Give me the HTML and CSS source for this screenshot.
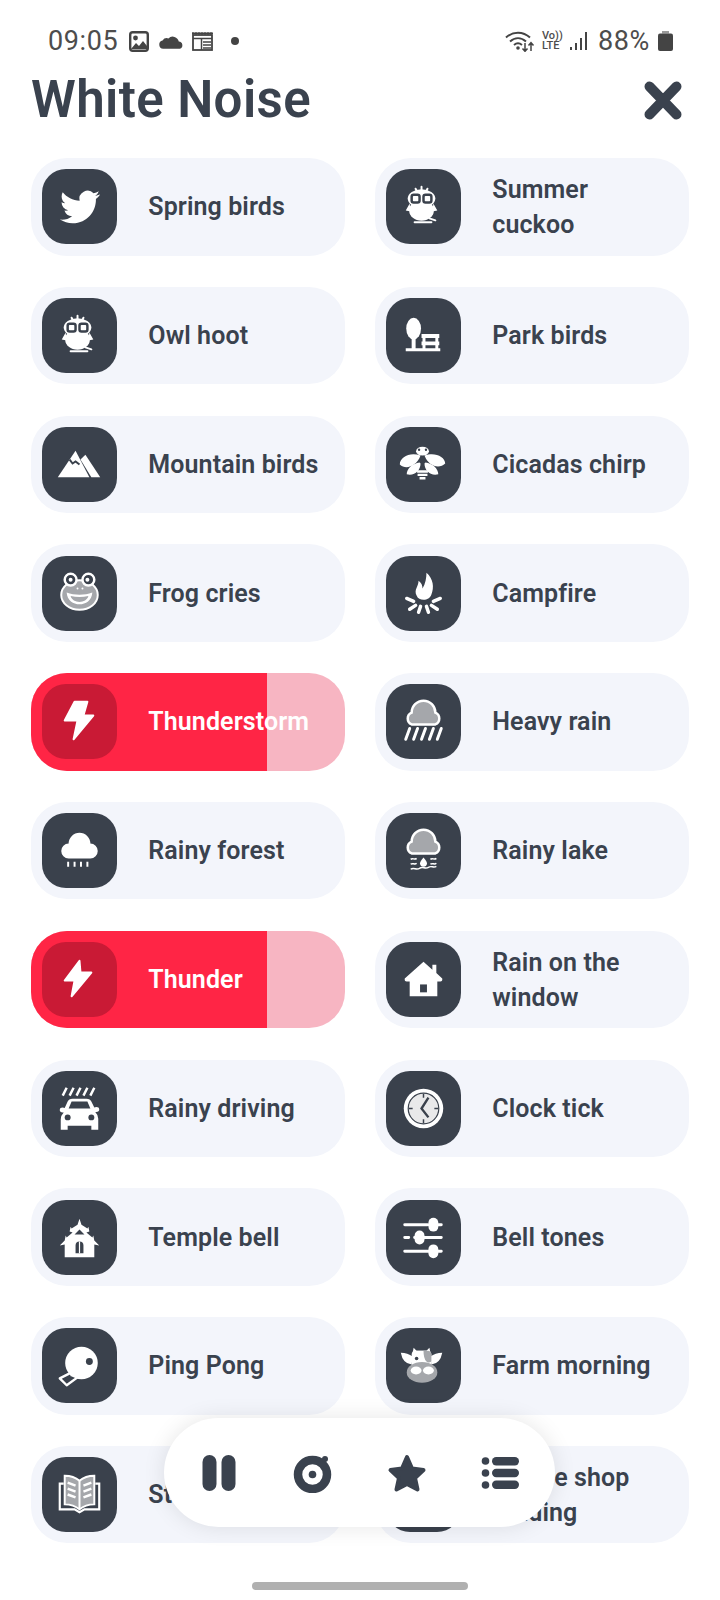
FILE: index.html
```html
<!DOCTYPE html>
<html lang="en">
<head>
  <meta charset="UTF-8" />
  <meta name="viewport" content="width=device-width, initial-scale=1" />
  <title>White Noise</title>
  <link rel="stylesheet" href="styles.css">
</head>
<body>
  <div class="page">
    <!-- Status bar -->
    <div class="status-bar">
      <div class="status-left">
        <span class="status-time">09:05</span>
        <svg class="st-image" viewBox="0 0 20 21"><rect x="1.200" y="1.200" width="17.600" height="18.600" rx="2.500" fill="#fff" stroke="#444" stroke-width="2.400"/><circle cx="6.500" cy="7" r="2.400" fill="#444"/><path d="M2 18l5-6 3 3 4-5 4 5v3H2z" fill="#444"/></svg>
        <svg class="st-cloud" viewBox="0 0 24 14"><path d="M4 14a4 4 0 0 1-.6-7.900A5 5 0 0 1 9 4a6 6 0 0 1 10 3 3.600 3.600 0 0 1 1 7z" fill="#444"/></svg>
        <svg class="st-cal" viewBox="0 0 21 19"><rect x="1" y="3" width="19" height="15" fill="#fff" stroke="#444" stroke-width="1.800"/><path d="M0 1.200h21M1 6.500h19M9.500 7v11M11 10h8M11 13h8M11 16h8" stroke="#444" stroke-width="1.500" fill="none"/><path d="M1 0v3M4 0v3M7 0v3M10 0v3M13 0v3M16 0v3M19 0v3" stroke="#444"/></svg>
        <span class="status-dot"></span>
      </div>
      <div class="status-right">
        <svg class="st-wifi" viewBox="0 0 30 22"><path d="M1 7.500C8 1 18 1 25 7.500M5 11.500c5-4.500 11-4.500 16 0M9 15c3-2.500 5-2.500 8 0" fill="none" stroke="#444" stroke-width="2"/><circle cx="13" cy="18" r="1.800" fill="#444"/><path d="M20 13v8M17.500 18.500l2.500 2.800 2.500-2.800M26 21v-8M23.500 15.500l2.500-2.800 2.500 2.800" fill="none" stroke="#444" stroke-width="1.500"/></svg>
        <span class="status-volte">Vo))<br>LTE</span>
        <svg class="st-signal" viewBox="0 0 18 18"><path d="M1 15v3M6 11v7M11 6v12M16 0v18" stroke="#444" stroke-width="2" fill="none"/></svg>
        <span class="status-battery-text">88%</span>
        <svg class="st-battery" viewBox="0 0 15 20"><path d="M4 0h7v2.500H4z" fill="#9a9a9a"/><rect y="2.500" width="15" height="17.500" rx="2" fill="#444"/></svg>
      </div>
    </div>

    <!-- Header -->
    <div class="header">
      <h1>White Noise</h1>
      <svg class="close-icon" viewBox="0 0 38 39"><path d="M5.500 5.500l27 28M32.500 5.500l-27 28" fill="none" stroke="#3a424e" stroke-width="10" stroke-linecap="round"/></svg>
    </div>

    <!-- Sound list -->
    <div class="sound-grid">
      <div class="sound-card">
        <div class="sound-icon"><svg viewBox="0 0 24 24" class="icon-bird"><path fill="#fff" d="M23.953 4.570a10 10 0 0 1-2.825.775 4.958 4.958 0 0 0 2.163-2.723c-.951.555-2.005.959-3.127 1.184a4.920 4.920 0 0 0-8.384 4.482C7.690 8.095 4.067 6.130 1.640 3.162a4.822 4.822 0 0 0-.666 2.475c0 1.710.870 3.213 2.188 4.096a4.904 4.904 0 0 1-2.228-.616v.060a4.923 4.923 0 0 0 3.946 4.827 4.996 4.996 0 0 1-2.212.085 4.936 4.936 0 0 0 4.604 3.417 9.867 9.867 0 0 1-6.102 2.105c-.390 0-.779-.023-1.170-.067a13.995 13.995 0 0 0 7.557 2.209c9.053 0 13.998-7.496 13.998-13.985 0-.210 0-.420-.015-.630A9.935 9.935 0 0 0 24 4.590z"/></svg></div>
        <span class="sound-name">Spring birds</span>
      </div>
      <div class="sound-card">
        <div class="sound-icon"><svg viewBox="0 0 76 76"><use href="#owl"/></svg></div>
        <span class="sound-name">Summer cuckoo</span>
      </div>
      <div class="sound-card">
        <div class="sound-icon"><svg viewBox="0 0 76 76"><use href="#owl"/></svg></div>
        <span class="sound-name">Owl hoot</span>
      </div>
      <div class="sound-card">
        <div class="sound-icon"><svg viewBox="0 0 76 76"><ellipse cx="28" cy="31" rx="7.500" ry="11" fill="#fff"/><path d="M26 40h4v12h-4zM20 51h35v3H20zM36 36.500h18v4H36zM36 44h18v4H36zM37 40h3v12h-3zM50 40h3v12h-3z" fill="#fff"/></svg></div>
        <span class="sound-name">Park birds</span>
      </div>
      <div class="sound-card">
        <div class="sound-icon"><svg viewBox="0 0 76 76"><path d="M16 51l18-27 14 27z" fill="#fff"/><path d="M28 33l3 4 3-2 4 3" fill="none" stroke="#3a414c" stroke-width="2"/><path d="M39 33l5-5 15 23H50z" fill="#fff"/></svg></div>
        <span class="sound-name">Mountain birds</span>
      </div>
      <div class="sound-card">
        <div class="sound-icon"><svg viewBox="0 0 76 76"><ellipse cx="37" cy="24.500" rx="6.500" ry="4.500" fill="#fff"/><circle cx="33.500" cy="23" r="1.200" fill="#3a414c"/><circle cx="40.500" cy="23" r="1.200" fill="#3a414c"/><path d="M35 29C25 25 14 30 14 38c6 6 17 2 21-9zM39 29c10-4 21 1 21 8-6 6-17 3-21-8z" fill="#fff"/><path d="M34 36c-7 1-13 6-13 12 8 2 14-4 14-11zM40 36c7 1 13 6 13 12-8 2-14-4-14-11z" fill="#fff"/><path d="M31.500 45h11M32 48.500h10M34 52h6" stroke="#fff" stroke-width="2.500" fill="none"/></svg></div>
        <span class="sound-name">Cicadas chirp</span>
      </div>
      <div class="sound-card">
        <div class="sound-icon"><svg viewBox="0 0 76 76"><ellipse cx="38" cy="39.500" rx="18.500" ry="15" fill="#a5a7ab" stroke="#fff" stroke-width="2"/><circle cx="29" cy="24" r="6" fill="#3a414c" stroke="#fff" stroke-width="2.500"/><circle cx="47" cy="24" r="6" fill="#3a414c" stroke="#fff" stroke-width="2.500"/><circle cx="29" cy="24" r="2" fill="#fff"/><circle cx="46" cy="24" r="2" fill="#fff"/><path d="M25 37c8 3 18 3 26 0-1 16-25 16-26 0z" fill="#fff"/><path d="M29 40.500c6 1.500 12 1.500 18 0-2 8-16 8-18 0z" fill="#a5a7ab"/><circle cx="36" cy="33" r="1" fill="#fff"/><circle cx="41" cy="33" r="1" fill="#fff"/></svg></div>
        <span class="sound-name">Frog cries</span>
      </div>
      <div class="sound-card">
        <div class="sound-icon"><svg viewBox="0 0 76 76"><path d="M41 17c7 6 8 15 5 22-2 7-13 7-15 1-3-6 2-9 2-15 3 2 4 5 4 8 3-5 4-11 4-16z" fill="#fff"/><path d="M21 43l7 3M24 54l6-4M33 57l2-6M43 57l-2-6M52 54l-6-4M55 43l-7 3" stroke="#fff" stroke-width="3.500" stroke-linecap="round"/></svg></div>
        <span class="sound-name">Campfire</span>
      </div>
      <div class="sound-card is-playing">
        <div class="sound-fill" style="width: 75%"></div>
        <div class="sound-icon"><svg viewBox="0 0 76 76"><path d="M33 18h13l-4 14h10L32 56l4-19H23z" fill="#fff" stroke="#fff" stroke-width="2" stroke-linejoin="round"/></svg></div>
        <span class="sound-name">Thunderstorm</span>
      </div>
      <div class="sound-card">
        <div class="sound-icon"><svg viewBox="0 0 76 76"><use href="#cloud-gray"/><path d="M20 56l4-11M28 56l4-11M36 56l4-11M44 56l4-11M52 56l4-11" stroke="#fff" stroke-width="3" stroke-linecap="round"/></svg></div>
        <span class="sound-name">Heavy rain</span>
      </div>
      <div class="sound-card">
        <div class="sound-icon"><svg viewBox="0 0 76 76"><path d="M27 46A7.500 7.500 0 0 1 27 31 11 11 0 0 1 49 31 7.500 7.500 0 0 1 49 46z" fill="#fff"/><path d="M26.500 49.500v5M33 49.500v5M39.500 49.500v5M46 49.500v5" stroke="#fff" stroke-width="2"/></svg></div>
        <span class="sound-name">Rainy forest</span>
      </div>
      <div class="sound-card">
        <div class="sound-icon"><svg viewBox="0 0 76 76"><use href="#cloud-gray"/><path d="M38 45c2.500 3 3.500 4.500 3.500 6a3.500 3.500 0 0 1-7 0c0-1.500 1-3 3.500-6z" fill="#fff"/><path d="M25 47c2-2 4 1 6-1M45 47c2-2 4 1 6-1M25 52c2-2 4 1 6-1M45 52c2-2 4 1 6-1M25 57c3-2 6 1 9-1s6 1 9-1 5 1 8-1" stroke="#fff" stroke-width="1.500" fill="none"/></svg></div>
        <span class="sound-name">Rainy lake</span>
      </div>
      <div class="sound-card is-playing">
        <div class="sound-fill" style="width: 75%"></div>
        <div class="sound-icon"><svg viewBox="0 0 76 76"><path d="M38 19L23 39h10l-3 16 20-24H39z" fill="#fff" stroke="#fff" stroke-width="2" stroke-linejoin="round"/></svg></div>
        <span class="sound-name">Thunder</span>
      </div>
      <div class="sound-card">
        <div class="sound-icon"><svg viewBox="0 0 76 76"><path d="M38 20l9 8v-5h4v8.500l6 5.500q.5 3-2 3h-3v15H24V40h-3q-2.500 0-2-3z" fill="#fff"/><rect x="34.500" y="43" width="7" height="8" fill="#3a414c"/></svg></div>
        <span class="sound-name">Rain on the window</span>
      </div>
      <div class="sound-card">
        <div class="sound-icon"><svg viewBox="0 0 76 76"><path d="M21 25l4-8M28 25l4-8M35 25l4-8M42 25l4-8M49 25l4-8" stroke="#fff" stroke-width="2.500"/><path d="M26 31q1-3 5-3h14q4 0 5 3l3 6 2-.5q3 0 3 2.500t-3 2.500h-1q3 3 3 7v11h-7v-4H26v4h-7V49q0-4 3-7h-1q-3 0-3-2.500t3-2.500l2 .5z" fill="#fff"/><path d="M30 31h16l3 7H27z" fill="#3a414c"/><circle cx="26" cy="47" r="3" fill="#3a414c"/><circle cx="50" cy="47" r="3" fill="#3a414c"/></svg></div>
        <span class="sound-name">Rainy driving</span>
      </div>
      <div class="sound-card">
        <div class="sound-icon"><svg viewBox="0 0 76 76"><circle cx="38" cy="38" r="20" fill="#fff"/><circle cx="38" cy="38" r="15.500" fill="#e9e9ea" stroke="#3a414c" stroke-width="1.200"/><path d="M38 23v4M38 49v4M23 38h4M49 38h4" stroke="#3a414c" stroke-width="1.500"/><path d="M43 27l-7 11 7 9" fill="none" stroke="#3a414c" stroke-width="2.400"/></svg></div>
        <span class="sound-name">Clock tick</span>
      </div>
      <div class="sound-card">
        <div class="sound-icon"><svg viewBox="0 0 76 76"><path d="M38 19l2 6 6 4 1-2 1 5-3 1 6 5 1-2 1 5 5 5-5-1v13H23V45l-5 1 5-5 1-5 1 2 6-5-3-1 1-5 1 2 6-4z" fill="#fff"/><path d="M38 30l5 5H33z" fill="#3a414c"/><path d="M34 54V46a4 4 0 0 1 8 0v8z" fill="#3a414c"/><path d="M38 42v12" stroke="#fff" stroke-width="1.200"/></svg></div>
        <span class="sound-name">Temple bell</span>
      </div>
      <div class="sound-card">
        <div class="sound-icon"><svg viewBox="0 0 76 76"><path d="M19 25h23M44 25h12M19 38h4M29 38h27M19 52h23M44 52h12" stroke="#fff" stroke-width="3" stroke-linecap="round"/><rect x="43" y="18" width="10" height="14" rx="5" fill="#fff"/><rect x="29" y="31" width="10" height="14" rx="5" fill="#fff"/><rect x="43" y="45" width="10" height="14" rx="5" fill="#fff"/></svg></div>
        <span class="sound-name">Bell tones</span>
      </div>
      <div class="sound-card">
        <div class="sound-icon"><svg viewBox="0 0 76 76"><path d="M30 45L18 51l7 7 11-8" fill="none" stroke="#fff" stroke-width="2.400" stroke-linejoin="round"/><circle cx="40" cy="35.500" r="16.500" fill="#fff"/><path d="M27 42l2 7 7 1z" fill="#fff"/><circle cx="48" cy="34" r="3.500" fill="#3a414c"/></svg></div>
        <span class="sound-name">Ping Pong</span>
      </div>
      <div class="sound-card">
        <div class="sound-icon"><svg viewBox="0 0 76 76"><path d="M15 25q7 0 12 4l-1 8q-9-1-11-12zM57 25q-7 0-12 4l1 8q9-1 11-12z" fill="#fff"/><path d="M27 25l1-5 3 3h10l3-3 1 5z" fill="#fff"/><path d="M26 27q0-4 4-4h12q4 0 4 4v14H26z" fill="#fff"/><path d="M38 23h4q4 0 4 4v7q-3 2-5 0-3-3-3-11z" fill="#a5a7ab"/><circle cx="31" cy="31" r="1.800" fill="#3a414c"/><ellipse cx="36.500" cy="45" rx="15.500" ry="10.500" fill="#a5a7ab"/><ellipse cx="30.500" cy="43" rx="5.500" ry="4" fill="#fff"/><ellipse cx="43" cy="43" rx="5.500" ry="4" fill="#fff"/></svg></div>
        <span class="sound-name">Farm morning</span>
      </div>
      <div class="sound-card">
        <div class="sound-icon"><svg viewBox="0 0 76 76"><path d="M22 27h-4v26h15l5 3 5-3h15V27h-4" fill="none" stroke="#fff" stroke-width="2.200"/><path d="M23 19q9 0 15 5 6-5 15-5v29q-9 0-15 5-6-5-15-5z" fill="#a5a7ab" stroke="#fff" stroke-width="2"/><path d="M38 24v29" stroke="#fff" stroke-width="2"/><path d="M26 26l8 3M26 32l8 3M26 38l8 3M50 26l-8 3M50 32l-8 3M50 38l-8 3" stroke="#fff" stroke-width="2.500"/></svg></div>
        <span class="sound-name">Studying</span>
      </div>
      <div class="sound-card">
        <div class="sound-icon"><svg viewBox="0 0 76 76"><path d="M22 26h26v18a10 10 0 0 1-10 10h-6a10 10 0 0 1-10-10z" fill="#fff"/></svg></div>
        <span class="sound-name">Coffee shop reading</span>
      </div>
    </div>

    <div class="home-bar"></div>

    <!-- Player controls, floats over the list -->
    <div class="player">
      <svg class="player-icon" viewBox="0 0 40 40"><rect x="3.500" y="2" width="14" height="36" rx="7"/><rect x="22.500" y="2" width="14" height="36" rx="7"/></svg>
      <svg class="player-icon" viewBox="0 0 40 40"><circle cx="19.500" cy="21.500" r="14.500" fill="none" stroke="#3a424e" stroke-width="8.500"/><circle cx="19.500" cy="21.500" r="3.800"/><circle cx="32" cy="6" r="3"/></svg>
      <svg class="player-icon" viewBox="0 0 40 40"><path d="M20 4l5 11.500 11.500 1.500-8.500 8 2.500 11.500L20 31l-10.500 5.500L12 25l-8.500-8L15 15.500z" stroke="#3a424e" stroke-width="4" stroke-linejoin="round"/></svg>
      <svg class="player-icon" viewBox="0 0 40 40"><circle cx="4.500" cy="8" r="3.800"/><circle cx="4.500" cy="20" r="3.800"/><circle cx="4.500" cy="32" r="3.800"/><rect x="11" y="4" width="27" height="8.500" rx="4.200"/><rect x="11" y="15.800" width="27" height="8.500" rx="4.200"/><rect x="11" y="27.500" width="27" height="8.500" rx="4.200"/></svg>
    </div>
  </div>

  <!-- Shared icon shapes -->
  <svg class="icon-defs" aria-hidden="true">
    <defs>
      <g id="owl">
        <path d="M30 20l1.500 3M36 18v4M42 20l-1.500 3" stroke="#fff" stroke-width="2" stroke-linecap="round"/>
        <ellipse cx="36" cy="30" rx="14" ry="9.500" fill="#fff"/>
        <ellipse cx="36" cy="42" rx="12.500" ry="10.500" fill="#fff"/>
        <path d="M24 35l-4 7 5 1zM48 35l4 7-5 1z" fill="#fff"/>
        <path d="M29 54h17M44 50l6 2" stroke="#fff" stroke-width="2" stroke-linecap="round"/>
        <rect x="26" y="26" width="8" height="8" rx="2" fill="#fff" stroke="#3a414c" stroke-width="2.500"/>
        <rect x="38" y="26" width="8" height="8" rx="2" fill="#fff" stroke="#3a414c" stroke-width="2.500"/>
      </g>
      <path id="cloud-gray" d="M26 41A6.500 6.500 0 0 1 26 29 12 12 0 0 1 50 29 6.500 6.500 0 0 1 50 41z" fill="#a5a7ab" stroke="#fff" stroke-width="2.500"/>
    </defs>
  </svg>
</body>
</html>
```

FILE: styles.css
```css
* {
  box-sizing: border-box;
  margin: 0;
  padding: 0;
}
body {
  background: #fff;
  color: #3a424e;
  font-family: Roboto, "Noto Sans", sans-serif;
}
.page {
  position: relative;
  width: 720px;
  height: 1600px;
  overflow: hidden;
}
.icon-defs {
  position: absolute;
  width: 0;
  height: 0;
}
.status-bar {
  display: flex;
  justify-content: space-between;
  align-items: center;
  height: 40px;
  margin-top: 21px;
  padding: 0 47px 0 48px;
  color: #4d4d4d;
  font-size: 27px;
  letter-spacing: 0.6px;
}
.status-left,
.status-right {
  display: flex;
  align-items: center;
}
.status-time {
  width: 81px;
}
.st-image {
  width: 20px;
  height: 21px;
  margin-right: 10px;
}
.st-cloud {
  width: 25px;
  height: 15px;
  margin-right: 8px;
}
.st-cal {
  width: 21px;
  height: 19px;
  margin-right: 18px;
}
.status-dot {
  width: 8px;
  height: 8px;
  border-radius: 50%;
  background: #444;
}
.st-wifi {
  width: 30px;
  height: 22px;
  margin-right: 7px;
}
.status-volte {
  width: 24px;
  margin-right: 4px;
  font-size: 11px;
  font-weight: 500;
  letter-spacing: 0;
  line-height: 10.500px;
}
.st-signal {
  width: 18px;
  height: 18px;
  margin-right: 10px;
}
.status-battery-text {
  width: 60px;
}
.st-battery {
  width: 15px;
  height: 20px;
}
.header {
  display: flex;
  justify-content: space-between;
  align-items: center;
  height: 60px;
  padding: 18px 38px 0 31px;
}
.header h1 {
  font-size: 51px;
  font-weight: 600;
  letter-spacing: 0.4px;
  line-height: 60px;
}
.close-icon {
  width: 38px;
  height: 39px;
}
.sound-grid {
  display: grid;
  grid-template-columns: 314px 314px;
  column-gap: 30px;
  row-gap: 31.300px;
  margin-top: 37px;
  padding-left: 31.300px;
}
.sound-card {
  position: relative;
  display: flex;
  align-items: center;
  height: 97.500px;
  padding: 0 11px;
  border-radius: 36px;
  background: #f3f5fb;
  overflow: hidden;
}
.sound-card.is-playing {
  background: #f7b5c2;
  color: #fff;
}
.sound-fill {
  position: absolute;
  top: 0;
  bottom: 0;
  left: 0;
  background: #ff2545;
}
.sound-icon {
  position: relative;
  flex-shrink: 0;
  width: 75px;
  height: 75px;
  border-radius: 24px;
  background: #3a414c;
}
.is-playing .sound-icon {
  background: #c91a35;
}
.sound-icon svg {
  display: block;
  width: 75px;
  height: 75px;
}
.sound-icon .icon-bird {
  width: 40px;
  height: 40px;
  margin: 18px 0 0 18px;
}
.sound-name {
  position: relative;
  max-width: 175px;
  margin-left: 31px;
  font-size: 25px;
  font-weight: 600;
  letter-spacing: 0.1px;
  line-height: 35px;
}
.home-bar {
  width: 216px;
  height: 8px;
  margin: 39px 0 0 252px;
  border-radius: 4px;
  background: #b0b0b0;
}
.player {
  position: absolute;
  top: 1418px;
  left: 164px;
  display: flex;
  justify-content: center;
  align-items: center;
  gap: 54px;
  width: 391px;
  height: 109px;
  border-radius: 55px;
  background: #fff;
  box-shadow: 0 0 22px rgba(0, 0, 0, 0.1);
}
.player-icon {
  width: 40px;
  height: 40px;
  fill: #3a424e;
}
```
